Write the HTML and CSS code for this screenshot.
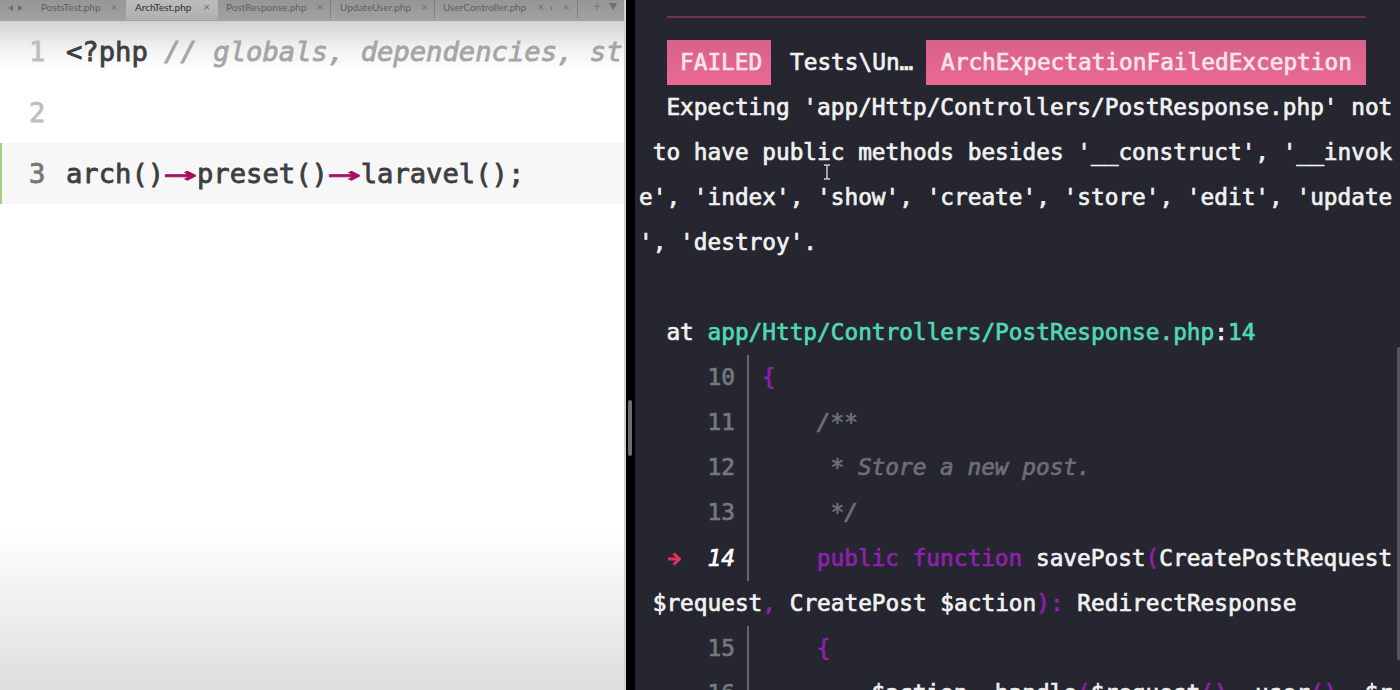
FILE: index.html
```html
<!DOCTYPE html>
<html lang="en">
<head>
<meta charset="utf-8">
<title>ArchTest.php</title>
<link rel="stylesheet" href="styles.css">
</head>
<body>
<div class="app">
  <section class="editor">
    <nav class="tabs">
      <div class="nav-arrows"><span class="tri-l"></span><span class="tri-r"></span></div>
      <div class="tab t1"><span>PostsTest.php</span><i>×</i></div>
      <div class="tab active t2"><span>ArchTest.php</span><i>×</i></div>
      <div class="tab t3"><span>PostResponse.php</span><i>×</i></div>
      <div class="tab t4"><span>UpdateUser.php</span><i>×</i></div>
      <div class="tab t5"><span>UserController.php</span><i>×</i></div>
      <div class="tab t6"><b>›</b><i>×</i></div>
      <div class="tab-tools"><em>+</em><span class="tri-d"></span></div>
    </nav>
    <div class="code">
      <div class="line"><span class="num">1</span><span class="src">&lt;?php <span class="cm">// globals, dependencies, st</span></span></div>
      <div class="line"><span class="num">2</span><span class="src"></span></div>
      <div class="line current"><span class="num">3</span><span class="src">arch()<span class="arrow"><span>→</span></span>preset()<span class="arrow"><span>→</span></span>laravel();</span></div>
    </div>
    <div class="fade"></div>
  </section>

  <div class="divider"><span class="handle"></span></div>

  <section class="term">
    <div class="rule"></div>
    <div class="row head"><span class="badge failed">FAILED</span><span class="tname">Tests\Un…</span><span class="badge exc">ArchExpectationFailedException</span></div>
    <div class="row">  Expecting 'app/Http/Controllers/PostResponse.php' not</div>
    <div class="row"> to have public methods besides '__construct', '__invok</div>
    <div class="row">e', 'index', 'show', 'create', 'store', 'edit', 'update</div>
    <div class="row">', 'destroy'.</div>
    <div class="row"></div>
    <div class="row">  at <span class="path">app/Http/Controllers/PostResponse.php</span>:<span class="path">14</span></div>
    <div class="row src-row"><span class="gut">10</span><span class="kw">{</span></div>
    <div class="row src-row"><span class="gut">11</span><span class="cmt">    /**</span></div>
    <div class="row src-row"><span class="gut">12</span><span class="cmt">     * Store a new post.</span></div>
    <div class="row src-row"><span class="gut">13</span><span class="cmt">     */</span></div>
    <div class="row src-row hit"><span class="gut"><svg class="mark" width="14" height="16" viewBox="0 0 14 16"><path d="M6.5 2.5 L12.5 8 L6.5 13.5 M12 8 L1 8" fill="none" stroke="#e5305f" stroke-width="3"/></svg><span>14</span></span>    <span class="kw">public function</span> savePost<span class="kw">(</span>CreatePostRequest</div>
    <div class="row"> $request<span class="kw">,</span> CreatePost $action<span class="kw">):</span> RedirectResponse</div>
    <div class="row src-row"><span class="gut">15</span><span class="kw">    {</span></div>
    <div class="row src-row"><span class="gut">16</span>        $action<span class="arrow dim"><span>→</span></span>handle<span class="kw">(</span>$request<span class="kw">()</span><span class="arrow dim"><span>→</span></span>user<span class="kw">()</span>, $r</div>
    <span class="scroll"></span>
    <svg class="ibeam" width="8" height="16" viewBox="0 0 8 16"><path d="M1 1h2l1 1 1-1h2M4 2v12M1 15h2l1-1 1 1h2" fill="none" stroke="#d2d2d2" stroke-width="1.4"/></svg>
  </section>
</div>
</body>
</html>
```
FILE: styles.css
```css
* { box-sizing: border-box; }
html, body { margin: 0; height: 100%; overflow: hidden; background: #25262f; }
.app { display: flex; width: 1400px; height: 690px; overflow: hidden; }

/* editor */
.editor { position: relative; width: 626px; flex: none; background: #fff; display: flex; flex-direction: column; overflow: hidden; border-right: 2px solid #cfcfcf; }
.tabs { height: 21px; flex: none; display: flex; align-items: stretch; background: linear-gradient(#969696, #a2a2a2); font: 10px/15px "Lato", "Liberation Sans", sans-serif; color: #5f5f5f; }
.nav-arrows { width: 41px; display: flex; gap: 5px; padding: 4px 0 0 8px; }
.tri-l, .tri-r { width: 0; height: 0; border-top: 3.5px solid transparent; border-bottom: 3.5px solid transparent; margin-top: 1px; }
.tri-l { border-right: 5px solid #707070; }
.tri-r { border-left: 5px solid #707070; }
.tab { display: flex; align-items: flex-start; height: 18px; line-height: 14px; }
.tab i { font-style: normal; font-size: 12px; color: #727272; }
.tab span { flex: none; }
.t1 { width: 85px; }
.t1 i { margin-left: 10px; }
.t2 { width: 92px; padding-left: 9px; height: 20px; background: linear-gradient(#bcbcbc, #b0b0b0); color: #303030; border-radius: 0 0 3px 3px; }
.t2 i { margin-left: 12px; }
.t3 { width: 113px; padding-left: 8px; border-right: 1px solid #808080; }
.t3 i { margin-left: 10px; }
.t4 { width: 104px; padding-left: 9px; border-right: 1px solid #808080; }
.t4 i { margin-left: 10px; }
.t5 { width: 115px; padding-left: 8px; }
.t5 i { margin-left: 11px; }
.t6 { width: 28px; border-right: 1px solid #808080; }
.t6 b { font-weight: 400; color: #555; }
.t6 i { margin-left: 10px; }
.tab-tools { display: flex; gap: 8px; padding-left: 15px; }
.tab-tools em { font: 14px/13px "Liberation Sans", sans-serif; color: #7a7a7a; }
.tri-d { width: 0; height: 0; margin-top: 3px; border-left: 4px solid transparent; border-right: 4px solid transparent; border-top: 7px solid #6e6e6e; }

.code { font: 27.2px/61px "DejaVu Sans Mono", monospace; -webkit-text-stroke: 0.8px currentColor; color: #3b3e43; background: linear-gradient(#d2d2d2 0, #f2f2f2 28px, #fff 50px); flex: 1; }
.line { display: flex; height: 61px; white-space: pre; }
.line.current { background: #f7f7f7; border-left: 2px solid #a5cf79; }
.line.current .num { width: 64px; padding-left: 27px; color: #75787b; }
.num { width: 66px; padding-left: 29px; color: #bcbec0; flex: none; }
.cm { color: #a3a5a7; font-style: italic; }
.arrow { display: inline-block; width: 2ch; color: #a50d66; }
.arrow span { display: inline-block; transform: scaleX(2); transform-origin: 0 50%; }
.arrow.dim { color: #8f1fae; }
.fade { position: absolute; left: 0; right: 0; bottom: 0; height: 160px; background: linear-gradient(rgba(222,222,222,0), rgba(222,222,222,1)); pointer-events: none; }

/* divider */
.divider { position: relative; width: 9px; flex: none; background: #000; }
.handle { position: absolute; left: 2px; top: 400px; width: 4px; height: 56px; border-radius: 2px; background: #6d6d6f; }

/* terminal */
.term { position: relative; flex: 1; min-width: 0; padding-left: 4px; background: #25262f; font: 22.76px/45.1px "DejaVu Sans Mono", monospace; -webkit-text-stroke: 0.7px currentColor; color: #f1f1f1; overflow: hidden; }
.rule { height: 2px; margin: 16px 0 21.5px 28px; width: 699px; background: #6a3350; }
.row { display: block; height: 45.1px; white-space: pre; }
.row.head { display: flex; padding-left: 28px; }
.badge { height: 45px; padding: 0 14px; background: linear-gradient(#d8628a, #ea6893); color: #f7e3ea; }
.failed { width: 104px; padding-left: 13px; }
.tname { width: 155px; padding-left: 19px; }
.exc { width: 440px; padding-left: 15px; }
.path { color: #4fd8b2; }
.gut { display: inline-block; position: relative; width: 110px; padding-right: 12px; text-align: right; color: #77787e; border-right: 2px solid #66676c; margin-right: 13px; height: 45.1px; vertical-align: top; }
.hit .gut span { color: #fff; font-style: italic; }
.mark { position: absolute; left: 28px; top: 15px; -webkit-text-stroke: 0; }
.kw { color: #8f1fae; }
.cmt { color: #6d6e73; font-style: italic; }
.scroll { position: absolute; right: 0; top: 347px; width: 3px; height: 313px; background: #55565c; border-radius: 2px 0 0 2px; }
.ibeam { position: absolute; left: 188px; top: 164px; }
```
